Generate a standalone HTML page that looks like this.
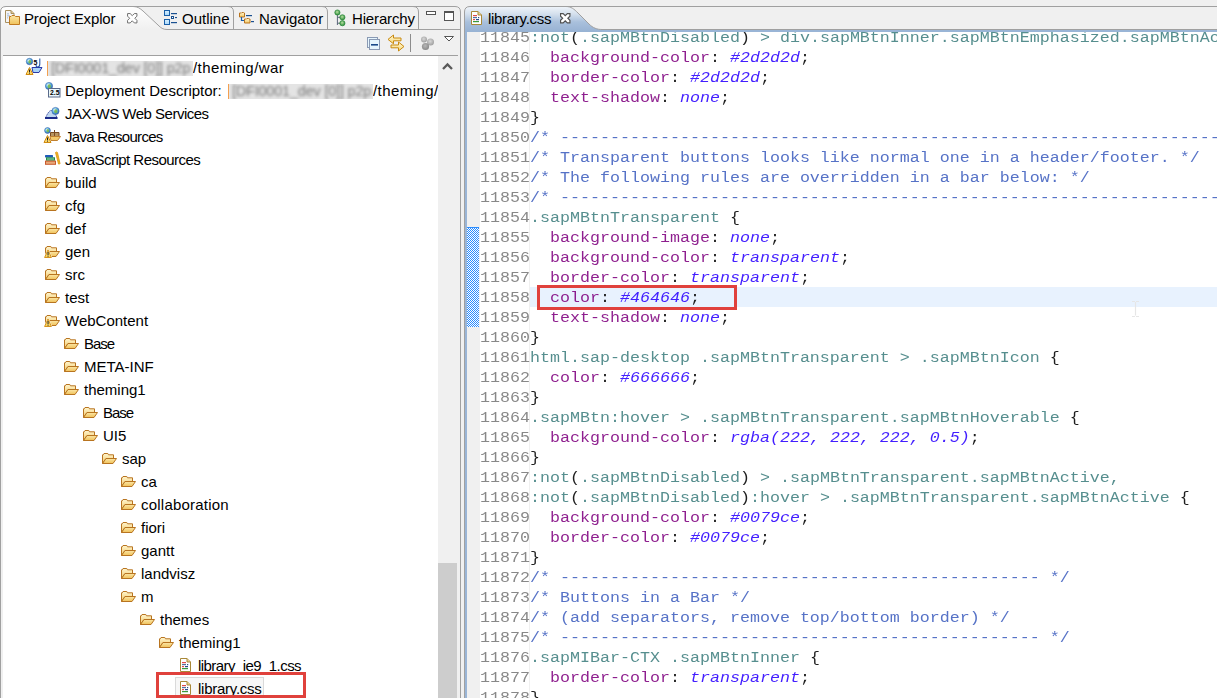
<!DOCTYPE html>
<html><head><meta charset="utf-8">
<style>
*{margin:0;padding:0;box-sizing:border-box}
html,body{width:1217px;height:698px;overflow:hidden;background:#f0f0f0;position:relative}
body{font-family:"Liberation Sans",sans-serif;font-size:15px;color:#000}
.abs{position:absolute}
svg{position:absolute;overflow:visible}
.tabt{position:absolute;top:7px;height:23px;line-height:23px;font-size:15px;white-space:nowrap;color:#000}
#tree{position:absolute;left:3px;top:56px;width:435px;height:642px;background:#fff;overflow:hidden}
.tr{position:absolute;left:0;height:23px;line-height:23px;white-space:nowrap;font-size:15px}
.tr .ic{position:absolute;top:0}
.tr .tx{position:absolute;top:0;transform-origin:0 50%}
#editor{position:absolute;left:467px;top:32px;width:750px;height:666px;background:#fff;overflow:hidden}
.ln{position:absolute;left:13px;width:50px;height:20px;line-height:20px;font-family:"Liberation Mono",monospace;font-size:16.67px;color:#787878;white-space:pre;transform:scaleY(0.87);transform-origin:0 14.5px;opacity:0.88}
.cl{position:absolute;left:63px;height:20px;line-height:20px;font-family:"Liberation Mono",monospace;font-size:16.67px;white-space:pre;transform:scaleY(0.87);transform-origin:0 14.5px;opacity:0.88}
</style></head><body>

<!-- ============ LEFT PANEL CHROME ============ -->
<svg width="1217" height="698" style="left:0;top:0">
  <defs>
    <linearGradient id="actab" x1="0" y1="0" x2="0" y2="1">
      <stop offset="0" stop-color="#ffffff"/><stop offset="1" stop-color="#f0f0f0"/>
    </linearGradient>
    <linearGradient id="edtab" x1="0" y1="0" x2="0" y2="1">
      <stop offset="0" stop-color="#eef3f9"/><stop offset="0.28" stop-color="#d4e0ed"/><stop offset="0.6" stop-color="#a9c0dc"/><stop offset="1" stop-color="#97b2d3"/>
    </linearGradient>
  </defs>
  <!-- left panel active tab fill -->
  <path d="M1,29.5 V12 Q1,7 6,7 H133 C138,7 140,8.5 143,11 L158,25 C161,28 163,29.5 167,29.5 Z" fill="url(#actab)"/>
  <!-- left panel outer border -->
  <path d="M0.5,698 V12 Q0.5,6.5 6,6.5 H455 Q460.5,6.5 460.5,12 V698" fill="none" stroke="#a0a0a0"/>
  <!-- active tab curve -->
  <path d="M133,6.5 C138,6.5 140,8.5 143,11 L158,25 C161,28 163,29.5 167,29.5 H460" fill="none" stroke="#a0a0a0"/>
  <!-- inactive tab separators -->
  <path d="M233.5,29 V12 Q233.5,6.5 228,6.5 M327.5,29 V12 Q327.5,6.5 322,6.5 M418.5,29 V12 Q418.5,6.5 413,6.5" fill="none" stroke="#a0a0a0"/>
  <!-- toolbar separator -->
  <path d="M3,55.5 H458" stroke="#a0a0a0"/>

  <!-- ============ EDITOR CHROME ============ -->
  <path d="M465,32 V12 Q465,7 470,7 H566 C571,7 574,9 578,13 L589,24 C593,28 597,29.5 602,29.5 V32 H465 Z" fill="url(#edtab)"/>
  <path d="M464.5,698 V12 Q464.5,6.5 470,6.5 H1217" fill="none" stroke="#a0a0a0"/>
  <path d="M566,6.5 C571,6.5 574,9 578,13 L589,24 C593,28 597,29.5 602,29.5 H1217" fill="none" stroke="#a0a0a0"/>
  <rect x="602" y="30" width="615" height="2" fill="#9ab5d6"/>
  <rect x="465" y="32" width="2" height="666" fill="#9ab5d6"/>
</svg>

<!-- tab titles -->
<div class="tabt" style="left:24px;letter-spacing:-0.14px">Project Explor</div>
<div class="tabt" style="left:182px">Outline</div>
<div class="tabt" style="left:259px">Navigator</div>
<div class="tabt" style="left:352px;letter-spacing:-0.15px">Hierarchy</div>
<div class="tabt" style="left:488px;letter-spacing:-0.3px">library.css</div>

<!-- ICONS: tabs -->
<svg width="0" height="0" style="left:0;top:0"><defs>
<linearGradient id="fold" x1="0" y1="0" x2="0" y2="1"><stop offset="0" stop-color="#fff6d0"/><stop offset="1" stop-color="#f2c865"/></linearGradient>
<linearGradient id="fold2" x1="0" y1="0" x2="0" y2="1"><stop offset="0" stop-color="#fbe6a6"/><stop offset="1" stop-color="#f0c25a"/></linearGradient>
<radialGradient id="globe" cx="0.4" cy="0.35" r="0.7"><stop offset="0" stop-color="#f0f8ff"/><stop offset="0.5" stop-color="#5ab0e0"/><stop offset="1" stop-color="#2a5aa8"/></radialGradient>
<radialGradient id="gball" cx="0.45" cy="0.4" r="0.6"><stop offset="0" stop-color="#b8e0a0"/><stop offset="1" stop-color="#2a8a3a"/></radialGradient>
<radialGradient id="grayball" cx="0.45" cy="0.4" r="0.6"><stop offset="0" stop-color="#d8d8d8"/><stop offset="1" stop-color="#a0a0a0"/></radialGradient><radialGradient id="grayball2" cx="0.45" cy="0.4" r="0.6"><stop offset="0" stop-color="#b8b8b8"/><stop offset="1" stop-color="#888"/></radialGradient>
<linearGradient id="lsq" x1="0" y1="0" x2="0" y2="1"><stop offset="0" stop-color="#d8f0ff"/><stop offset="1" stop-color="#a8d8fa"/></linearGradient>
<linearGradient id="arrowf" x1="0" y1="0" x2="0" y2="1"><stop offset="0" stop-color="#fff8d8"/><stop offset="1" stop-color="#f8d878"/></linearGradient>
</defs></svg><svg width="16" height="16" viewBox="0 0 16 16" style="left:5px;top:10px" ><path d="M0.5,0.5 H6 L9,3.5 V12.5 H0.5 Z" fill="#f4f4f4" stroke="#a89060"/><path d="M6,0.5 V3.5 H9" fill="#e0c890" stroke="#a89060"/><rect x="2" y="3.5" width="2" height="0.8" fill="#8aa8d0"/><rect x="2" y="5.5" width="3" height="0.8" fill="#8aa8d0"/><rect x="2" y="7.5" width="1" height="0.8" fill="#8aa8d0"/><path d="M4.5,14.5 V6.5 H6 L7,5.5 H9.5 L10.5,6.5 H14.5 V14.5 Z" fill="url(#fold2)" stroke="#c07a20" stroke-linejoin="round"/></svg><svg width="10.5" height="10.5" viewBox="0 0 10.5 10.5" style="left:127px;top:13px" ><path d="M0.57,0.57 L3.15,0.57 L5.25,2.67 L7.35,0.57 L9.93,0.57 L9.93,3.15 L7.83,5.25 L9.93,7.35 L9.93,9.93 L7.35,9.93 L5.25,7.83 L3.15,9.93 L0.57,9.93 L0.57,7.35 L2.67,5.25 L0.57,3.15 Z" fill="#fff" stroke="#707070" stroke-width="1" stroke-linejoin="miter"/></svg><svg width="14" height="15" viewBox="0 0 14 15" style="left:164px;top:10px" ><rect x="0.5" y="0.5" width="5" height="5" fill="url(#lsq)" stroke="#1a5fa8"/><rect x="0.5" y="9.5" width="5" height="5" fill="url(#lsq)" stroke="#1a5fa8"/><rect x="7" y="3" width="6" height="1.2" fill="#1a5090"/><rect x="7.5" y="6.5" width="2" height="2" fill="#fff" stroke="#1a5090"/><rect x="11" y="7" width="2" height="1.1" fill="#1a5090"/><rect x="7" y="12" width="6" height="1.2" fill="#1a5090"/></svg><svg width="16" height="12" viewBox="0 0 16 12" style="left:239px;top:12px" ><path d="M0.5,5 V1 H2.5 L3,0.5 H4.5 L5,1 H5.5 V5 Z" fill="url(#fold)" stroke="#b87420"/><rect x="7" y="3" width="6" height="1.2" fill="#1a5090"/><path d="M2.5,5 V8.5 H5" fill="none" stroke="#1a5fa8" stroke-width="1.2"/><path d="M5.5,11 V7 H7.5 L8,6.5 H9.5 L10,7 H11 V11 Z" fill="url(#fold)" stroke="#b87420"/><rect x="12" y="9" width="3" height="1.2" fill="#1a5090"/></svg><svg width="12" height="18" viewBox="0 0 12 18" style="left:334px;top:9px" ><path d="M3.4,5 V16 M3.4,8.3 H6 M3.4,14.2 H6" fill="none" stroke="#5a6478" stroke-width="1"/><circle cx="3.4" cy="3.5" r="2.6" fill="url(#gball)" stroke="#2a8a3a" stroke-width="0.7"/><circle cx="8.4" cy="8.3" r="2.6" fill="url(#gball)" stroke="#2a8a3a" stroke-width="0.7"/><circle cx="8.4" cy="14.2" r="2.6" fill="url(#gball)" stroke="#2a8a3a" stroke-width="0.7"/></svg><svg width="470" height="30" viewBox="0 0 470 30" style="left:0px;top:0px" ><rect x="426.5" y="11.5" width="9" height="3" fill="#fff" stroke="#555" stroke-width="1"/><rect x="444.5" y="11.5" width="9" height="9" fill="#fff" stroke="#555" stroke-width="1"/><rect x="444" y="11" width="10" height="2" fill="#555"/></svg><svg width="470" height="60" viewBox="0 0 470 60" style="left:0px;top:0px" ><rect x="367.5" y="37.5" width="10" height="10" fill="#e6f6fe" stroke="#8a9ab4"/><rect x="369.5" y="39.5" width="10" height="10" fill="#e6f6fe" stroke="#8a9ab4"/><rect x="371" y="44" width="7" height="1.6" fill="#1a4a8a"/><path d="M388,39.4 L393.5,35 V38 H401 V40.8 H393.5 V43.8 Z" fill="url(#arrowf)" stroke="#c88a10" stroke-linejoin="round"/><path d="M404,46.5 L398.5,42 V45 H391 V47.8 H398.5 V51 Z" fill="url(#arrowf)" stroke="#c88a10" stroke-linejoin="round"/><rect x="410" y="34" width="1" height="18" fill="#8c8c8c"/><circle cx="424" cy="39.5" r="3" fill="url(#grayball)"/><circle cx="430.5" cy="42" r="3.5" fill="url(#grayball)"/><circle cx="425.5" cy="46.5" r="3.6" fill="url(#grayball2)"/><path d="M444.5,36.5 H453.5 L449,41 Z" fill="#fff" stroke="#555" stroke-linejoin="round"/></svg><svg width="11" height="14" viewBox="0 0 11 14" style="left:471px;top:11px" ><path d="M0.5,0.5 H7 L10.5,4 V13.5 H0.5 Z" fill="#fff" stroke="#a88838"/><path d="M7,0.5 V4 H10.5" fill="#e8d090" stroke="#a88838"/><rect x="2" y="4" width="4" height="1.2" fill="#e04a4a"/><rect x="2" y="6" width="4" height="1.2" fill="#5070a0"/><rect x="7" y="6" width="1.2" height="1.2" fill="#2a4a8a"/><rect x="2" y="8" width="2" height="1.2" fill="#e04a4a"/><rect x="5" y="8" width="3" height="1.2" fill="#2a4a8a"/><rect x="2" y="10" width="6" height="1.2" fill="#3a9a3a"/></svg><svg width="10.5" height="10.5" viewBox="0 0 10.5 10.5" style="left:560px;top:13px" ><path d="M0.57,0.57 L3.15,0.57 L5.25,2.67 L7.35,0.57 L9.93,0.57 L9.93,3.15 L7.83,5.25 L9.93,7.35 L9.93,9.93 L7.35,9.93 L5.25,7.83 L3.15,9.93 L0.57,9.93 L0.57,7.35 L2.67,5.25 L0.57,3.15 Z" fill="#fff" stroke="#505050" stroke-width="1.15" stroke-linejoin="miter"/></svg>

<!-- tree -->
<div id="tree">
<div class="tr" style="top:0px;width:437px"><svg width="17" height="17" viewBox="0 0 17 17" style="left:23px;top:2px" ><circle cx="3.5" cy="3.5" r="3.2" fill="url(#globe)" stroke="#3a6ab0" stroke-width="0.6"/><ellipse cx="3.8" cy="3.7" rx="1.4400000000000002" ry="1.7600000000000002" fill="#7ab840" opacity="0.85"/><text x="7.5" y="6.5" font-family="Liberation Sans" font-weight="bold" font-size="7" fill="#000">5</text><path d="M13.8,0.5 V6 Q13.8,9 11.5,9 Q10,9 10,7" fill="none" stroke="#2a5aa8" stroke-width="1.1"/><path d="M6,9.5 H16 L13,14.5 H7 Z" fill="#a8d4f8" stroke="#2a3aa8"/><path d="M3.5,9.5 L7,16.5 H0 Z" fill="#fbd76a" stroke="#d08a10" stroke-linejoin="round"/><rect x="3" y="11.5" width="1" height="2.6" fill="#222"/><rect x="3" y="14.6" width="1" height="1" fill="#222"/></svg><span class="tx" style="left:44px"><span style="display:inline-block;position:relative;width:146px;height:15px;vertical-align:-3px;margin-left:0px;background:#e4e4e4;border-left:1px solid #f4a050;overflow:hidden"><span style="position:absolute;left:3px;top:-4px;color:#7a7a7a;filter:blur(1.4px);white-space:nowrap;letter-spacing:-0.2px;font-size:14.5px">[DFI0001_dev [0]] p2p</span></span><span style="letter-spacing:0.45px">/theming/war</span></span></div>
<div class="tr" style="top:23px;width:437px"><svg width="19" height="17" viewBox="0 0 19 17" style="left:42px;top:2px" ><circle cx="4" cy="5" r="3.6" fill="url(#globe)" stroke="#3a6ab0" stroke-width="0.6"/><ellipse cx="4.3" cy="5.2" rx="1.62" ry="1.9800000000000002" fill="#7ab840" opacity="0.85"/><rect x="3.5" y="7.5" width="11.5" height="8.5" fill="#eaf8ff" stroke="#5a6a8a"/><text x="5" y="14.3" font-family="Liberation Sans" font-weight="bold" font-size="6.8" fill="#000">2.5</text></svg><span class="tx" style="left:62px">Deployment Descriptor: <span style="display:inline-block;position:relative;width:145px;height:15px;vertical-align:-3px;margin-left:2px;background:#e4e4e4;border-left:1px solid #f4a050;overflow:hidden"><span style="position:absolute;left:3px;top:-4px;color:#7a7a7a;filter:blur(1.4px);white-space:nowrap;letter-spacing:-0.2px;font-size:14.5px">[DFI0001_dev [0]] p2p</span></span><span style="letter-spacing:0.45px">/theming/war</span></span></div>
<div class="tr" style="top:46px;width:437px"><svg width="15" height="15" viewBox="0 0 15 15" style="left:42px;top:4px" ><path d="M0.5,12 Q3,6 5.5,4.5 H7.5 Q10,6 12,12 Z" fill="#c0d8f0" stroke="#2a3a98" stroke-dasharray="1.5,1"/><rect x="0" y="11" width="12.5" height="2" fill="#1a2a88"/><circle cx="10.5" cy="5" r="3.6" fill="url(#globe)" stroke="#3a6ab0" stroke-width="0.6"/><ellipse cx="10.8" cy="5.2" rx="1.62" ry="1.9800000000000002" fill="#7ab840" opacity="0.85"/></svg><span class="tx" style="left:62px;letter-spacing:-0.5px">JAX-WS Web Services</span></div>
<div class="tr" style="top:69px;width:437px"><svg width="17" height="17" viewBox="0 0 17 17" style="left:41px;top:1px" ><circle cx="3.5" cy="4.5" r="2.9" fill="url(#globe)" stroke="#3a6ab0" stroke-width="0.6"/><ellipse cx="3.8" cy="4.7" rx="1.305" ry="1.595" fill="#7ab840" opacity="0.85"/><path d="M6.5,6.5 H15 V10 H6.5 Z M10.5,4 V10 M6.5,8 H15" fill="#f8e0a0" stroke="#7a4a20"/><path d="M6,10.5 H16.5 L13.5,14.5 H7 Z" fill="#f2c86a" stroke="#c08030"/><path d="M3.5,9.5 L7,16.5 H0 Z" fill="#fbd76a" stroke="#d08a10" stroke-linejoin="round"/><rect x="3" y="11.5" width="1" height="2.6" fill="#222"/><rect x="3" y="14.6" width="1" height="1" fill="#222"/></svg><span class="tx" style="left:62px;letter-spacing:-0.71px">Java Resources</span></div>
<div class="tr" style="top:92px;width:437px"><svg width="16" height="16" viewBox="0 0 16 16" style="left:42px;top:2px" ><rect x="0" y="5" width="8" height="2.4" rx="0.6" fill="#1f5cb8"/><rect x="1" y="7.3" width="9" height="3.4" fill="#1f8a4a"/><rect x="2" y="8.4" width="7" height="1.2" fill="#8ad0a0"/><rect x="0" y="10.6" width="11" height="4.2" fill="#c8582a"/><rect x="1" y="11.6" width="9" height="2.2" fill="#e8a878"/><path d="M10.5,2.5 Q11.5,1.5 12.5,2.5 L15,13.5 Q14.5,14.5 13.5,14 Z" fill="#f2b820" stroke="#d89010" stroke-width="0.8"/></svg><span class="tx" style="left:62px;letter-spacing:-0.53px">JavaScript Resources</span></div>
<div class="tr" style="top:115px;width:437px"><svg width="15" height="11" viewBox="0 0 15 11" style="left:42px;top:6px" ><path d="M0.5,10.5 V1.8 H1.3 L2,0.5 H5.8 L6.5,1.8 H11.5 V5.5 H4 Z" fill="url(#fold)" stroke="#b87420" stroke-linejoin="round"/><path d="M0.5,10.5 L4,5.5 H14.5 L11,10.5 Z" fill="url(#fold2)" stroke="#b87420" stroke-linejoin="round"/></svg><span class="tx" style="left:62px">build</span></div>
<div class="tr" style="top:138px;width:437px"><svg width="15" height="11" viewBox="0 0 15 11" style="left:42px;top:6px" ><path d="M0.5,10.5 V1.8 H1.3 L2,0.5 H5.8 L6.5,1.8 H11.5 V5.5 H4 Z" fill="url(#fold)" stroke="#b87420" stroke-linejoin="round"/><path d="M0.5,10.5 L4,5.5 H14.5 L11,10.5 Z" fill="url(#fold2)" stroke="#b87420" stroke-linejoin="round"/></svg><span class="tx" style="left:62px">cfg</span></div>
<div class="tr" style="top:161px;width:437px"><svg width="15" height="11" viewBox="0 0 15 11" style="left:42px;top:6px" ><path d="M0.5,10.5 V1.8 H1.3 L2,0.5 H5.8 L6.5,1.8 H11.5 V5.5 H4 Z" fill="url(#fold)" stroke="#b87420" stroke-linejoin="round"/><path d="M0.5,10.5 L4,5.5 H14.5 L11,10.5 Z" fill="url(#fold2)" stroke="#b87420" stroke-linejoin="round"/></svg><span class="tx" style="left:62px">def</span></div>
<div class="tr" style="top:184px;width:437px"><svg width="15" height="11" viewBox="0 0 15 11" style="left:42px;top:6px" ><path d="M0.5,10.5 V1.8 H1.3 L2,0.5 H5.8 L6.5,1.8 H11.5 V5.5 H4 Z" fill="url(#fold)" stroke="#b87420" stroke-linejoin="round"/><path d="M0.5,10.5 L4,5.5 H14.5 L11,10.5 Z" fill="url(#fold2)" stroke="#b87420" stroke-linejoin="round"/></svg><svg width="8" height="9" viewBox="0 0 8 9" style="left:41px;top:9px" ><path d="M4,0.8 L7.4,8.5 H0.6 Z" fill="#fcd660" stroke="#fff" stroke-width="1.6" stroke-linejoin="round"/><path d="M4,0.8 L7.4,8.5 H0.6 Z" fill="#fcd660" stroke="#d08a10" stroke-width="0.9" stroke-linejoin="round"/><rect x="3.5" y="3" width="1.1" height="3" fill="#333"/><rect x="3.5" y="6.6" width="1.1" height="1.1" fill="#333"/></svg><span class="tx" style="left:62px">gen</span></div>
<div class="tr" style="top:207px;width:437px"><svg width="15" height="11" viewBox="0 0 15 11" style="left:42px;top:6px" ><path d="M0.5,10.5 V1.8 H1.3 L2,0.5 H5.8 L6.5,1.8 H11.5 V5.5 H4 Z" fill="url(#fold)" stroke="#b87420" stroke-linejoin="round"/><path d="M0.5,10.5 L4,5.5 H14.5 L11,10.5 Z" fill="url(#fold2)" stroke="#b87420" stroke-linejoin="round"/></svg><span class="tx" style="left:62px">src</span></div>
<div class="tr" style="top:230px;width:437px"><svg width="15" height="11" viewBox="0 0 15 11" style="left:42px;top:6px" ><path d="M0.5,10.5 V1.8 H1.3 L2,0.5 H5.8 L6.5,1.8 H11.5 V5.5 H4 Z" fill="url(#fold)" stroke="#b87420" stroke-linejoin="round"/><path d="M0.5,10.5 L4,5.5 H14.5 L11,10.5 Z" fill="url(#fold2)" stroke="#b87420" stroke-linejoin="round"/></svg><span class="tx" style="left:62px">test</span></div>
<div class="tr" style="top:253px;width:437px"><svg width="15" height="11" viewBox="0 0 15 11" style="left:42px;top:6px" ><path d="M0.5,10.5 V1.8 H1.3 L2,0.5 H5.8 L6.5,1.8 H11.5 V5.5 H4 Z" fill="url(#fold)" stroke="#b87420" stroke-linejoin="round"/><path d="M0.5,10.5 L4,5.5 H14.5 L11,10.5 Z" fill="url(#fold2)" stroke="#b87420" stroke-linejoin="round"/></svg><svg width="8" height="9" viewBox="0 0 8 9" style="left:41px;top:9px" ><path d="M4,0.8 L7.4,8.5 H0.6 Z" fill="#fcd660" stroke="#fff" stroke-width="1.6" stroke-linejoin="round"/><path d="M4,0.8 L7.4,8.5 H0.6 Z" fill="#fcd660" stroke="#d08a10" stroke-width="0.9" stroke-linejoin="round"/><rect x="3.5" y="3" width="1.1" height="3" fill="#333"/><rect x="3.5" y="6.6" width="1.1" height="1.1" fill="#333"/></svg><span class="tx" style="left:62px">WebContent</span></div>
<div class="tr" style="top:276px;width:437px"><svg width="15" height="11" viewBox="0 0 15 11" style="left:61px;top:6px" ><path d="M0.5,10.5 V1.8 H1.3 L2,0.5 H5.8 L6.5,1.8 H11.5 V5.5 H4 Z" fill="url(#fold)" stroke="#b87420" stroke-linejoin="round"/><path d="M0.5,10.5 L4,5.5 H14.5 L11,10.5 Z" fill="url(#fold2)" stroke="#b87420" stroke-linejoin="round"/></svg><span class="tx" style="left:81px;letter-spacing:-1.0px">Base</span></div>
<div class="tr" style="top:299px;width:437px"><svg width="15" height="11" viewBox="0 0 15 11" style="left:61px;top:6px" ><path d="M0.5,10.5 V1.8 H1.3 L2,0.5 H5.8 L6.5,1.8 H11.5 V5.5 H4 Z" fill="url(#fold)" stroke="#b87420" stroke-linejoin="round"/><path d="M0.5,10.5 L4,5.5 H14.5 L11,10.5 Z" fill="url(#fold2)" stroke="#b87420" stroke-linejoin="round"/></svg><span class="tx" style="left:81px">META-INF</span></div>
<div class="tr" style="top:322px;width:437px"><svg width="15" height="11" viewBox="0 0 15 11" style="left:61px;top:6px" ><path d="M0.5,10.5 V1.8 H1.3 L2,0.5 H5.8 L6.5,1.8 H11.5 V5.5 H4 Z" fill="url(#fold)" stroke="#b87420" stroke-linejoin="round"/><path d="M0.5,10.5 L4,5.5 H14.5 L11,10.5 Z" fill="url(#fold2)" stroke="#b87420" stroke-linejoin="round"/></svg><span class="tx" style="left:81px">theming1</span></div>
<div class="tr" style="top:345px;width:437px"><svg width="15" height="11" viewBox="0 0 15 11" style="left:80px;top:6px" ><path d="M0.5,10.5 V1.8 H1.3 L2,0.5 H5.8 L6.5,1.8 H11.5 V5.5 H4 Z" fill="url(#fold)" stroke="#b87420" stroke-linejoin="round"/><path d="M0.5,10.5 L4,5.5 H14.5 L11,10.5 Z" fill="url(#fold2)" stroke="#b87420" stroke-linejoin="round"/></svg><span class="tx" style="left:100px;letter-spacing:-1.0px">Base</span></div>
<div class="tr" style="top:368px;width:437px"><svg width="15" height="11" viewBox="0 0 15 11" style="left:80px;top:6px" ><path d="M0.5,10.5 V1.8 H1.3 L2,0.5 H5.8 L6.5,1.8 H11.5 V5.5 H4 Z" fill="url(#fold)" stroke="#b87420" stroke-linejoin="round"/><path d="M0.5,10.5 L4,5.5 H14.5 L11,10.5 Z" fill="url(#fold2)" stroke="#b87420" stroke-linejoin="round"/></svg><span class="tx" style="left:100px">UI5</span></div>
<div class="tr" style="top:391px;width:437px"><svg width="15" height="11" viewBox="0 0 15 11" style="left:99px;top:6px" ><path d="M0.5,10.5 V1.8 H1.3 L2,0.5 H5.8 L6.5,1.8 H11.5 V5.5 H4 Z" fill="url(#fold)" stroke="#b87420" stroke-linejoin="round"/><path d="M0.5,10.5 L4,5.5 H14.5 L11,10.5 Z" fill="url(#fold2)" stroke="#b87420" stroke-linejoin="round"/></svg><span class="tx" style="left:119px">sap</span></div>
<div class="tr" style="top:414px;width:437px"><svg width="15" height="11" viewBox="0 0 15 11" style="left:118px;top:6px" ><path d="M0.5,10.5 V1.8 H1.3 L2,0.5 H5.8 L6.5,1.8 H11.5 V5.5 H4 Z" fill="url(#fold)" stroke="#b87420" stroke-linejoin="round"/><path d="M0.5,10.5 L4,5.5 H14.5 L11,10.5 Z" fill="url(#fold2)" stroke="#b87420" stroke-linejoin="round"/></svg><span class="tx" style="left:138px">ca</span></div>
<div class="tr" style="top:437px;width:437px"><svg width="15" height="11" viewBox="0 0 15 11" style="left:118px;top:6px" ><path d="M0.5,10.5 V1.8 H1.3 L2,0.5 H5.8 L6.5,1.8 H11.5 V5.5 H4 Z" fill="url(#fold)" stroke="#b87420" stroke-linejoin="round"/><path d="M0.5,10.5 L4,5.5 H14.5 L11,10.5 Z" fill="url(#fold2)" stroke="#b87420" stroke-linejoin="round"/></svg><span class="tx" style="left:138px;letter-spacing:0.22px">collaboration</span></div>
<div class="tr" style="top:460px;width:437px"><svg width="15" height="11" viewBox="0 0 15 11" style="left:118px;top:6px" ><path d="M0.5,10.5 V1.8 H1.3 L2,0.5 H5.8 L6.5,1.8 H11.5 V5.5 H4 Z" fill="url(#fold)" stroke="#b87420" stroke-linejoin="round"/><path d="M0.5,10.5 L4,5.5 H14.5 L11,10.5 Z" fill="url(#fold2)" stroke="#b87420" stroke-linejoin="round"/></svg><span class="tx" style="left:138px">fiori</span></div>
<div class="tr" style="top:483px;width:437px"><svg width="15" height="11" viewBox="0 0 15 11" style="left:118px;top:6px" ><path d="M0.5,10.5 V1.8 H1.3 L2,0.5 H5.8 L6.5,1.8 H11.5 V5.5 H4 Z" fill="url(#fold)" stroke="#b87420" stroke-linejoin="round"/><path d="M0.5,10.5 L4,5.5 H14.5 L11,10.5 Z" fill="url(#fold2)" stroke="#b87420" stroke-linejoin="round"/></svg><span class="tx" style="left:138px">gantt</span></div>
<div class="tr" style="top:506px;width:437px"><svg width="15" height="11" viewBox="0 0 15 11" style="left:118px;top:6px" ><path d="M0.5,10.5 V1.8 H1.3 L2,0.5 H5.8 L6.5,1.8 H11.5 V5.5 H4 Z" fill="url(#fold)" stroke="#b87420" stroke-linejoin="round"/><path d="M0.5,10.5 L4,5.5 H14.5 L11,10.5 Z" fill="url(#fold2)" stroke="#b87420" stroke-linejoin="round"/></svg><span class="tx" style="left:138px">landvisz</span></div>
<div class="tr" style="top:529px;width:437px"><svg width="15" height="11" viewBox="0 0 15 11" style="left:118px;top:6px" ><path d="M0.5,10.5 V1.8 H1.3 L2,0.5 H5.8 L6.5,1.8 H11.5 V5.5 H4 Z" fill="url(#fold)" stroke="#b87420" stroke-linejoin="round"/><path d="M0.5,10.5 L4,5.5 H14.5 L11,10.5 Z" fill="url(#fold2)" stroke="#b87420" stroke-linejoin="round"/></svg><span class="tx" style="left:138px">m</span></div>
<div class="tr" style="top:552px;width:437px"><svg width="15" height="11" viewBox="0 0 15 11" style="left:137px;top:6px" ><path d="M0.5,10.5 V1.8 H1.3 L2,0.5 H5.8 L6.5,1.8 H11.5 V5.5 H4 Z" fill="url(#fold)" stroke="#b87420" stroke-linejoin="round"/><path d="M0.5,10.5 L4,5.5 H14.5 L11,10.5 Z" fill="url(#fold2)" stroke="#b87420" stroke-linejoin="round"/></svg><span class="tx" style="left:157px">themes</span></div>
<div class="tr" style="top:575px;width:437px"><svg width="15" height="11" viewBox="0 0 15 11" style="left:156px;top:6px" ><path d="M0.5,10.5 V1.8 H1.3 L2,0.5 H5.8 L6.5,1.8 H11.5 V5.5 H4 Z" fill="url(#fold)" stroke="#b87420" stroke-linejoin="round"/><path d="M0.5,10.5 L4,5.5 H14.5 L11,10.5 Z" fill="url(#fold2)" stroke="#b87420" stroke-linejoin="round"/></svg><span class="tx" style="left:176px">theming1</span></div>
<div class="tr" style="top:598px;width:437px"><svg width="11" height="14" viewBox="0 0 11 14" style="left:177px;top:4px" ><path d="M0.5,0.5 H7 L10.5,4 V13.5 H0.5 Z" fill="#fff" stroke="#a88838"/><path d="M7,0.5 V4 H10.5" fill="#e8d090" stroke="#a88838"/><rect x="2" y="4" width="4" height="1.2" fill="#e04a4a"/><rect x="2" y="6" width="4" height="1.2" fill="#5070a0"/><rect x="7" y="6" width="1.2" height="1.2" fill="#2a4a8a"/><rect x="2" y="8" width="2" height="1.2" fill="#e04a4a"/><rect x="5" y="8" width="3" height="1.2" fill="#2a4a8a"/><rect x="2" y="10" width="6" height="1.2" fill="#3a9a3a"/></svg><span class="tx" style="left:195px;letter-spacing:-0.56px">library_ie9_1.css</span></div>
<div class="tr" style="top:621px;width:437px"><div class="abs" style="left:172px;top:0px;width:89px;height:19px;background:#f7f7f7;border:1px solid #dadada"></div><svg width="11" height="14" viewBox="0 0 11 14" style="left:177px;top:4px" ><path d="M0.5,0.5 H7 L10.5,4 V13.5 H0.5 Z" fill="#fff" stroke="#a88838"/><path d="M7,0.5 V4 H10.5" fill="#e8d090" stroke="#a88838"/><rect x="2" y="4" width="4" height="1.2" fill="#e04a4a"/><rect x="2" y="6" width="4" height="1.2" fill="#5070a0"/><rect x="7" y="6" width="1.2" height="1.2" fill="#2a4a8a"/><rect x="2" y="8" width="2" height="1.2" fill="#e04a4a"/><rect x="5" y="8" width="3" height="1.2" fill="#2a4a8a"/><rect x="2" y="10" width="6" height="1.2" fill="#3a9a3a"/></svg><span class="tx" style="left:195px;letter-spacing:-0.26px">library.css</span></div>
</div>
<!-- left scrollbar -->
<div class="abs" style="left:438px;top:56px;width:20px;height:642px;background:#f0f0f0"></div>
<div class="abs" style="left:438px;top:563px;width:19px;height:135px;background:#cdcdcd"></div>
<svg width="20" height="20" style="left:438px;top:56px"><path d="M5,13 L9.5,8.5 L14,13" fill="none" stroke="#5a5a5a" stroke-width="2.3"/></svg>

<!-- editor -->
<div id="editor">
  <div class="abs" style="left:0;top:0;width:13px;height:667px;background:#f0f0f0"></div>
  <div class="abs" style="left:62px;top:0;width:1px;height:667px;background:#f0f0f0"></div>
  <div class="abs" style="left:63px;top:255px;width:700px;height:20px;background:#e8f2fe"></div>
  <svg width="12" height="100" style="left:0;top:195px">
    <defs><pattern id="chk" width="2" height="2" patternUnits="userSpaceOnUse">
      <rect width="2" height="2" fill="#ffffff"/><rect width="1" height="1" fill="#2a8cff"/><rect x="1" y="1" width="1" height="1" fill="#2a8cff"/>
    </pattern></defs>
    <rect width="12" height="100" fill="url(#chk)" shape-rendering="crispEdges"/>
    <rect width="12" height="1" fill="#2a8cff"/>
  </svg>
<div class="ln" style="top:-4px">11845</div>
<div class="ln" style="top:16px">11846</div>
<div class="ln" style="top:36px">11847</div>
<div class="ln" style="top:56px">11848</div>
<div class="ln" style="top:76px">11849</div>
<div class="ln" style="top:96px">11850</div>
<div class="ln" style="top:116px">11851</div>
<div class="ln" style="top:136px">11852</div>
<div class="ln" style="top:156px">11853</div>
<div class="ln" style="top:176px">11854</div>
<div class="ln" style="top:196px">11855</div>
<div class="ln" style="top:216px">11856</div>
<div class="ln" style="top:236px">11857</div>
<div class="ln" style="top:256px">11858</div>
<div class="ln" style="top:276px">11859</div>
<div class="ln" style="top:296px">11860</div>
<div class="ln" style="top:316px">11861</div>
<div class="ln" style="top:336px">11862</div>
<div class="ln" style="top:356px">11863</div>
<div class="ln" style="top:376px">11864</div>
<div class="ln" style="top:396px">11865</div>
<div class="ln" style="top:416px">11866</div>
<div class="ln" style="top:436px">11867</div>
<div class="ln" style="top:456px">11868</div>
<div class="ln" style="top:476px">11869</div>
<div class="ln" style="top:496px">11870</div>
<div class="ln" style="top:516px">11871</div>
<div class="ln" style="top:536px">11872</div>
<div class="ln" style="top:556px">11873</div>
<div class="ln" style="top:576px">11874</div>
<div class="ln" style="top:596px">11875</div>
<div class="ln" style="top:616px">11876</div>
<div class="ln" style="top:636px">11877</div>
<div class="ln" style="top:656px">11878</div>
<div class="cl" style="top:-4px"><span style="color:#3f7f7f">:not</span><span style="color:#000">(</span><span style="color:#3f7f7f">.sapMBtnDisabled</span><span style="color:#000">)</span><span style="color:#3f7f7f"> &gt; div.sapMBtnInner.sapMBtnEmphasized.sapMBtnActive </span><span style="color:#000">{</span></div>
<div class="cl" style="top:16px">  <span style="color:#7f007f">background-color</span><span style="color:#000">: </span><span style="color:#2a00ff;font-style:italic">#2d2d2d</span><span style="color:#000">;</span></div>
<div class="cl" style="top:36px">  <span style="color:#7f007f">border-color</span><span style="color:#000">: </span><span style="color:#2a00ff;font-style:italic">#2d2d2d</span><span style="color:#000">;</span></div>
<div class="cl" style="top:56px">  <span style="color:#7f007f">text-shadow</span><span style="color:#000">: </span><span style="color:#2a00ff;font-style:italic">none</span><span style="color:#000">;</span></div>
<div class="cl" style="top:76px"><span style="color:#000">}</span></div>
<div class="cl" style="top:96px"><span style="color:#3f5fbf">/* ------------------------------------------------------------------------------------------</span></div>
<div class="cl" style="top:116px"><span style="color:#3f5fbf">/* Transparent buttons looks like normal one in a header/footer. */</span></div>
<div class="cl" style="top:136px"><span style="color:#3f5fbf">/* The following rules are overridden in a bar below: */</span></div>
<div class="cl" style="top:156px"><span style="color:#3f5fbf">/* ------------------------------------------------------------------------------------------</span></div>
<div class="cl" style="top:176px"><span style="color:#3f7f7f">.sapMBtnTransparent </span><span style="color:#000">{</span></div>
<div class="cl" style="top:196px">  <span style="color:#7f007f">background-image</span><span style="color:#000">: </span><span style="color:#2a00ff;font-style:italic">none</span><span style="color:#000">;</span></div>
<div class="cl" style="top:216px">  <span style="color:#7f007f">background-color</span><span style="color:#000">: </span><span style="color:#2a00ff;font-style:italic">transparent</span><span style="color:#000">;</span></div>
<div class="cl" style="top:236px">  <span style="color:#7f007f">border-color</span><span style="color:#000">: </span><span style="color:#2a00ff;font-style:italic">transparent</span><span style="color:#000">;</span></div>
<div class="cl" style="top:256px">  <span style="color:#7f007f">color</span><span style="color:#000">: </span><span style="color:#2a00ff;font-style:italic">#464646</span><span style="color:#000">;</span></div>
<div class="cl" style="top:276px">  <span style="color:#7f007f">text-shadow</span><span style="color:#000">: </span><span style="color:#2a00ff;font-style:italic">none</span><span style="color:#000">;</span></div>
<div class="cl" style="top:296px"><span style="color:#000">}</span></div>
<div class="cl" style="top:316px"><span style="color:#3f7f7f">html.sap-desktop .sapMBtnTransparent &gt; .sapMBtnIcon </span><span style="color:#000">{</span></div>
<div class="cl" style="top:336px">  <span style="color:#7f007f">color</span><span style="color:#000">: </span><span style="color:#2a00ff;font-style:italic">#666666</span><span style="color:#000">;</span></div>
<div class="cl" style="top:356px"><span style="color:#000">}</span></div>
<div class="cl" style="top:376px"><span style="color:#3f7f7f">.sapMBtn:hover &gt; .sapMBtnTransparent.sapMBtnHoverable </span><span style="color:#000">{</span></div>
<div class="cl" style="top:396px">  <span style="color:#7f007f">background-color</span><span style="color:#000">: </span><span style="color:#2a00ff;font-style:italic">rgba(222, 222, 222, 0.5)</span><span style="color:#000">;</span></div>
<div class="cl" style="top:416px"><span style="color:#000">}</span></div>
<div class="cl" style="top:436px"><span style="color:#3f7f7f">:not</span><span style="color:#000">(</span><span style="color:#3f7f7f">.sapMBtnDisabled</span><span style="color:#000">)</span><span style="color:#3f7f7f"> &gt; .sapMBtnTransparent.sapMBtnActive,</span></div>
<div class="cl" style="top:456px"><span style="color:#3f7f7f">:not</span><span style="color:#000">(</span><span style="color:#3f7f7f">.sapMBtnDisabled</span><span style="color:#000">)</span><span style="color:#3f7f7f">:hover &gt; .sapMBtnTransparent.sapMBtnActive </span><span style="color:#000">{</span></div>
<div class="cl" style="top:476px">  <span style="color:#7f007f">background-color</span><span style="color:#000">: </span><span style="color:#2a00ff;font-style:italic">#0079ce</span><span style="color:#000">;</span></div>
<div class="cl" style="top:496px">  <span style="color:#7f007f">border-color</span><span style="color:#000">: </span><span style="color:#2a00ff;font-style:italic">#0079ce</span><span style="color:#000">;</span></div>
<div class="cl" style="top:516px"><span style="color:#000">}</span></div>
<div class="cl" style="top:536px"><span style="color:#3f5fbf">/* ------------------------------------------------ */</span></div>
<div class="cl" style="top:556px"><span style="color:#3f5fbf">/* Buttons in a Bar */</span></div>
<div class="cl" style="top:576px"><span style="color:#3f5fbf">/* (add separators, remove top/bottom border) */</span></div>
<div class="cl" style="top:596px"><span style="color:#3f5fbf">/* ------------------------------------------------ */</span></div>
<div class="cl" style="top:616px"><span style="color:#3f7f7f">.sapMIBar-CTX .sapMBtnInner </span><span style="color:#000">{</span></div>
<div class="cl" style="top:636px">  <span style="color:#7f007f">border-color</span><span style="color:#000">: </span><span style="color:#2a00ff;font-style:italic">transparent</span><span style="color:#000">;</span></div>
<div class="cl" style="top:656px"><span style="color:#000">}</span></div>
</div>

<svg width="10" height="18" style="left:1131px;top:300px"><path d="M1,1.5 H4 M5,1.5 H8 M4.5,2 V15.5 M1,16.5 H4 M5,16.5 H8" fill="none" stroke="#e6e6e6" stroke-width="1.2"/></svg>
<!-- red boxes -->
<div class="abs" style="left:537px;top:285px;width:200px;height:25px;border:3px solid #e0413c"></div>
<div class="abs" style="left:156px;top:672px;width:150px;height:26px;border:3px solid #e0413c"></div>

</body></html>
